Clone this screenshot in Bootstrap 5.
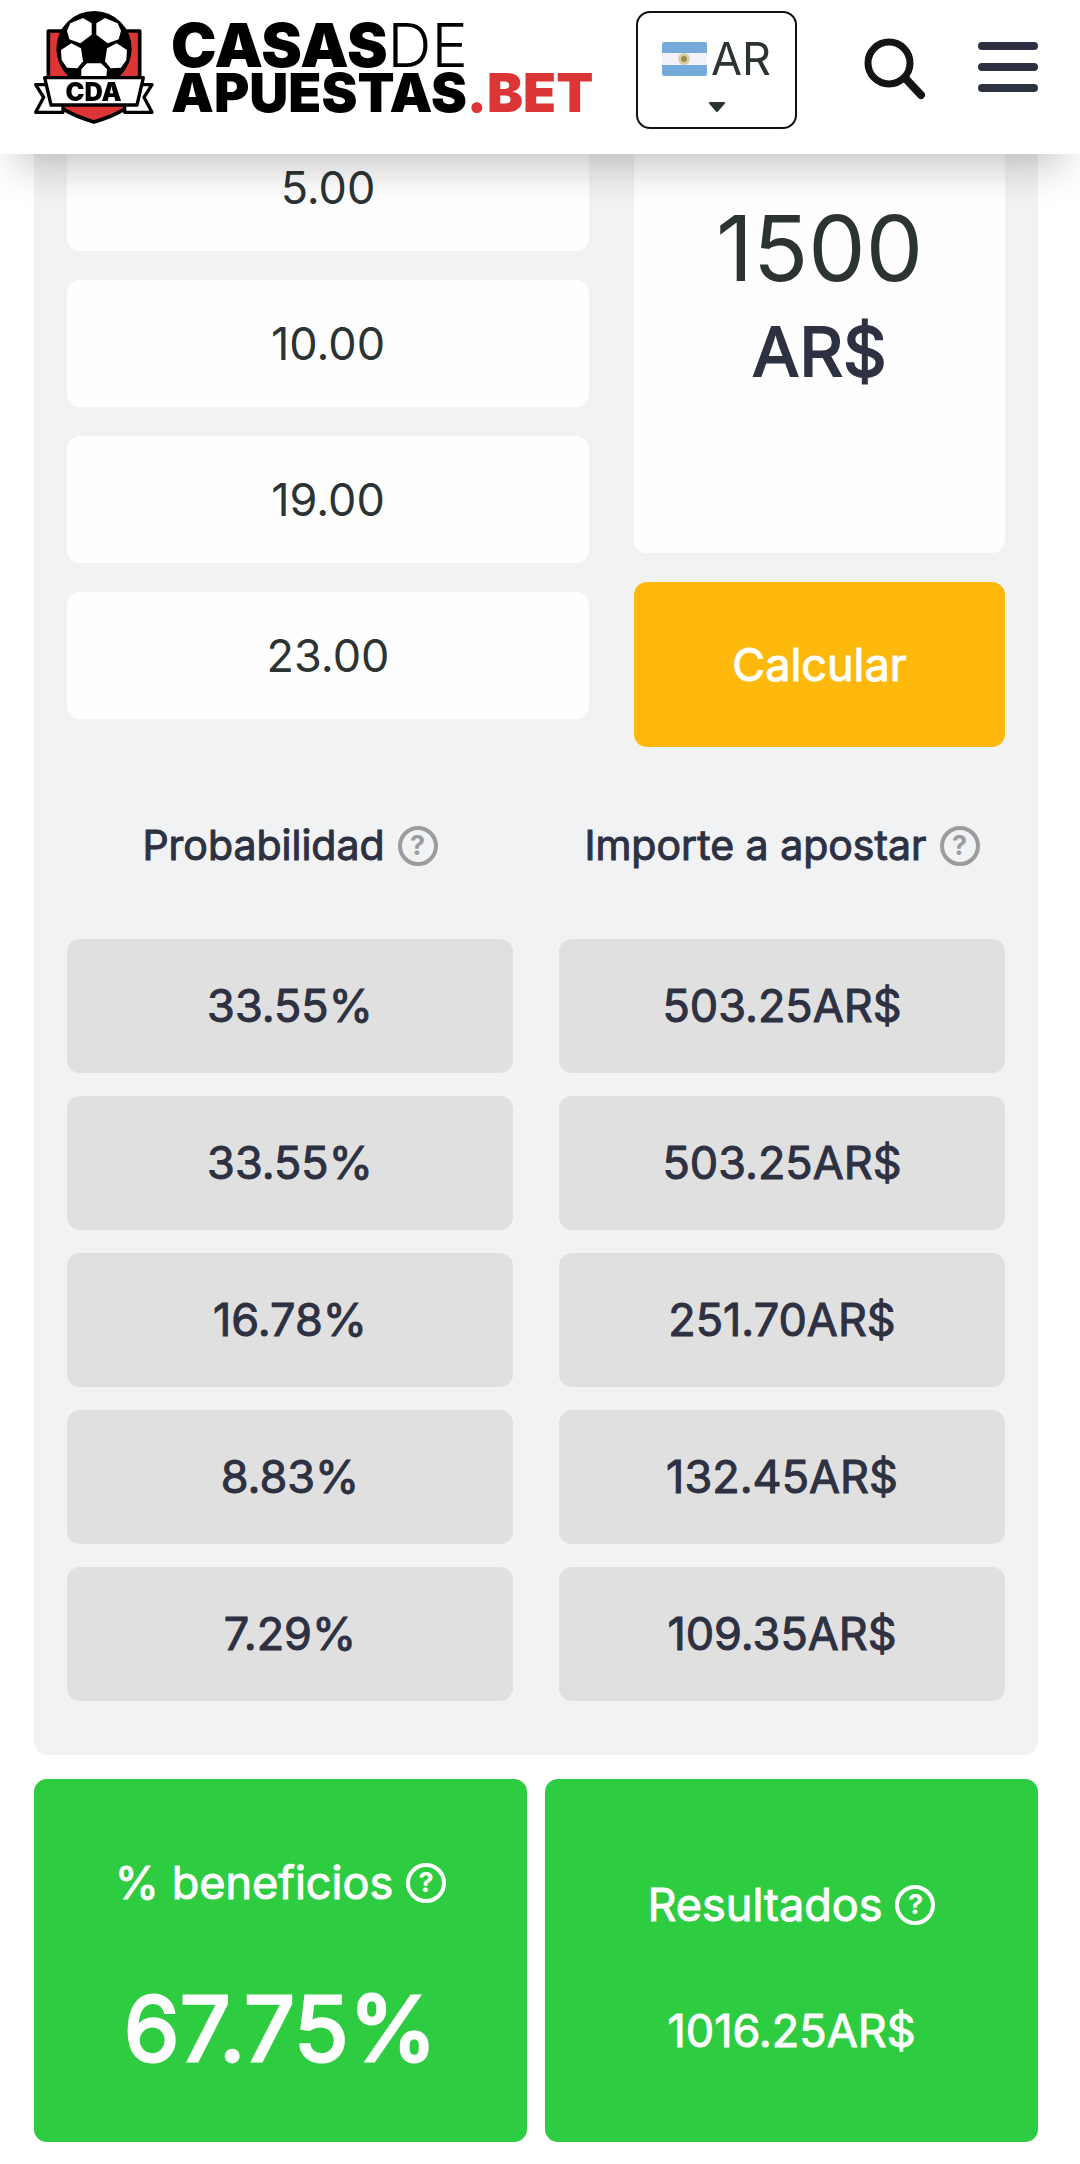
<!DOCTYPE html>
<html lang="es">
<head>
<meta charset="utf-8">
<meta name="viewport" content="width=device-width, initial-scale=1">
<title>Casas de Apuestas - Calculadora</title>
<link href="https://cdn.jsdelivr.net/npm/bootstrap@5.3.0/dist/css/bootstrap.min.css" rel="stylesheet">
<style>
  body { font-family: Inter, "Liberation Sans", sans-serif; font-size: 45px; color: #2d3142; background: #fff; }
  .site-header { padding: 11px 42px 25px 34px; box-shadow: 0 28px 42px -16px rgba(0,0,0,.23); }
  .brand-link { gap: 17px; color: #000; }
  .brand-words { font-weight: 900; }
  .brand-top { font-size: 61px; line-height: 45px; }
  .brand-top span { font-weight: 300; }
  .brand-bottom { font-size: 54px; line-height: 50px; }
  .brand-bottom span { color: #dc3535; }
  .emblem-text { font: 900 76px Inter, sans-serif; }
  .lang-btn { width: 161px; height: 118px; border: 2px solid #111; border-radius: 14px; background: #fff; color: #2c3333; line-height: 54px; padding: 19px 0 0; }
  .header-tools { gap: 67px; }
  .tool-group { gap: 50px; }
  .icon-btn { border: 0; padding: 0; background: none; line-height: 0; }
  .page-main { padding: 0 42px 22px 34px; }
  .calc-panel { background: #f1f2f4; border-radius: 0 0 13px 13px; padding: 124px 33px 31px; }
  .calc-top { display: grid; grid-template-columns: 522fr 371fr; column-gap: 45px; }
  .stack { gap: 29px; }
  .odd-input { height: 127px; border: 0; border-radius: 13px; background: #fefefe; color: #2c3333; text-align: center; width: 100%; min-width: 0; }
  .stake-box { background: #fefefe; border-radius: 13px; padding-top: 68px; min-height: 429px; }
  .stake-input { border: 0; background: none; width: 100%; height: 112px; text-align: center; font-size: 91px; color: #2c3333; padding: 0; }
  .stake-unit { font-size: 68px; line-height: 94px; -webkit-text-stroke: 2px currentColor; }
  .calc-btn { height: 165px; border: 0; border-radius: 13px; background: #ffb90d; color: #fff; font-size: 45px; }
  .calc-btn:hover { background: #f2ae05; color: #fff; }
  .calc-btn, .result-table, .stat-box { -webkit-text-stroke: 1px currentColor; }
  .result-table { width: calc(100% + 92px); margin: 6px -46px 0; table-layout: fixed; border-collapse: separate; border-spacing: 46px 23px; text-align: center; }
  .result-table th { height: 140px; padding: 0; font-size: 41px; font-weight: 400; white-space: nowrap; }
  .result-table td { height: 134px; padding: 0; background: #e0e0e0; border-radius: 13px; }
  .help-title { gap: 13px; }
  .help-btn { width: 40px; height: 40px; border: 4px solid currentColor; border-radius: 50%; background: none; color: #9c9c9f; font-size: 27px; font-weight: 700; line-height: 32px; padding: 0; -webkit-text-stroke: 0; }
  .stat-row { display: grid; grid-template-columns: 1fr 1fr; gap: 18px; margin-top: 24px; }
  .stat-box { background: #2ecc40; color: #fff; border-radius: 13px; padding: 72px 0 67px; gap: 68px; }
  .stat-box.compact { padding-top: 94px; gap: 62px; }
  .stat-title { line-height: 64px; }
  .stat-box .help-btn { color: #fff; }
  .stat-big { font-size: 90px; line-height: 92px; -webkit-text-stroke: 3px currentColor; }
  .stat-value { line-height: 64px; }
</style>
</head>
<body>
<header class="site-header fixed-top bg-white d-flex justify-content-between align-items-center">
  <a class="brand-link d-flex align-items-center text-decoration-none" href="#">
    <svg width="120" height="118" viewBox="101 33 360 354" aria-hidden="true">
      <path d="M144 93H418V280Q396 332 281 366Q166 332 144 280Z" fill="#dc3535" stroke="#000" stroke-width="11" stroke-linejoin="round"/>
      <circle cx="281" cy="146" r="113"/>
      <g fill="#fff">
        <path d="M210 70L248 54L274 70V104L240 130L207 118L200 92Z"/>
        <path d="M352 70L314 54L288 70V104L322 130L355 118L362 92Z"/>
        <path d="M182 150L213 130L242 145L248 184L231 205L200 203L184 180Z"/>
        <path d="M380 150L349 130L320 145L314 184L331 205L362 203L378 180Z"/>
        <path d="M260 190H302L320 208L318 232H243V208Z"/>
      </g>
      <g fill="#fff" stroke="#000" stroke-width="10" stroke-linejoin="round">
        <path d="M106 254H145L165 312H188V337H106L130 292Z"/>
        <path d="M455 254H416L396 312H373V337H455L431 292Z"/>
        <path d="M133 233H429L410 315H152Z"/>
      </g>
      <text class="emblem-text" x="280" y="303" text-anchor="middle">CDA</text>
    </svg>
    <div class="brand-words">
      <div class="brand-top">CASAS<span>DE</span></div>
      <div class="brand-bottom">APUESTAS<span>.BET</span></div>
    </div>
  </a>
  <div class="header-tools d-flex align-items-center">
    <button class="lang-btn d-flex flex-column align-items-center" type="button" aria-haspopup="true">
      <span class="d-flex align-items-center">
        <svg class="me-1" width="45" height="34" viewBox="0 0 45 34" aria-hidden="true">
          <rect width="45" height="34" rx="2" fill="#75aadb"/>
          <rect y="11" width="45" height="12" fill="#f3f2fb"/>
          <circle cx="22" cy="17" r="6" fill="#d9cfa6"/>
          <circle cx="22" cy="17" r="3" fill="#9c8a4e"/>
        </svg>AR</span>
      <svg class="mt-3" width="18" height="11" viewBox="0 0 18 11" aria-hidden="true"><path d="M2 1H16L9 9Z" fill="#2c3333" stroke="#2c3333" stroke-width="2" stroke-linejoin="round"/></svg>
    </button>
    <div class="tool-group d-flex align-items-center">
      <button class="icon-btn" type="button" aria-label="Buscar">
        <svg width="64" height="68" viewBox="0 0 64 68"><circle cx="25" cy="27" r="21" fill="none" stroke="#141414" stroke-width="7"/><path d="M42 43L57 59" stroke="#141414" stroke-width="8" stroke-linecap="round"/></svg>
      </button>
      <button class="icon-btn" type="button" aria-label="Menú">
        <svg width="60" height="58" viewBox="0 0 60 58"><g fill="#2d3142"><rect y="1" width="60" height="8" rx="4"/><rect y="22" width="60" height="8" rx="4"/><rect y="43" width="60" height="8" rx="4"/></g></svg>
      </button>
    </div>
  </div>
</header>

<main class="page-main">
  <section class="calc-panel">
    <form class="calc-top">
      <div class="stack d-flex flex-column">
        <input class="odd-input" type="text" inputmode="decimal" value="5.00" aria-label="Cuota 2">
        <input class="odd-input" type="text" inputmode="decimal" value="10.00" aria-label="Cuota 3">
        <input class="odd-input" type="text" inputmode="decimal" value="19.00" aria-label="Cuota 4">
        <input class="odd-input" type="text" inputmode="decimal" value="23.00" aria-label="Cuota 5">
      </div>
      <div class="stack d-flex flex-column">
        <div class="stake-box flex-grow-1 text-center">
          <input class="stake-input" id="stake" type="text" inputmode="numeric" value="1500">
          <label class="stake-unit d-block" for="stake">AR$</label>
        </div>
        <button class="calc-btn btn" type="button">Calcular</button>
      </div>
    </form>

    <table class="result-table">
      <thead>
        <tr>
          <th scope="col"><div class="help-title d-flex align-items-center justify-content-center">Probabilidad <button class="help-btn" type="button">?</button></div></th>
          <th scope="col"><div class="help-title d-flex align-items-center justify-content-center">Importe a apostar <button class="help-btn" type="button">?</button></div></th>
        </tr>
      </thead>
      <tbody>
        <tr><td>33.55%</td><td>503.25AR$</td></tr>
        <tr><td>33.55%</td><td>503.25AR$</td></tr>
        <tr><td>16.78%</td><td>251.70AR$</td></tr>
        <tr><td>8.83%</td><td>132.45AR$</td></tr>
        <tr><td>7.29%</td><td>109.35AR$</td></tr>
      </tbody>
    </table>
  </section>

  <section class="stat-row">
    <div class="stat-box d-flex flex-column align-items-center">
      <div class="stat-title help-title d-flex align-items-center">% beneficios <button class="help-btn" type="button">?</button></div>
      <div class="stat-big">67.75%</div>
    </div>
    <div class="stat-box compact d-flex flex-column align-items-center">
      <div class="stat-title help-title d-flex align-items-center">Resultados <button class="help-btn" type="button">?</button></div>
      <div class="stat-value">1016.25AR$</div>
    </div>
  </section>
</main>
<script src="https://cdn.jsdelivr.net/npm/bootstrap@5.3.0/dist/js/bootstrap.bundle.min.js"></script>
</body>
</html>
